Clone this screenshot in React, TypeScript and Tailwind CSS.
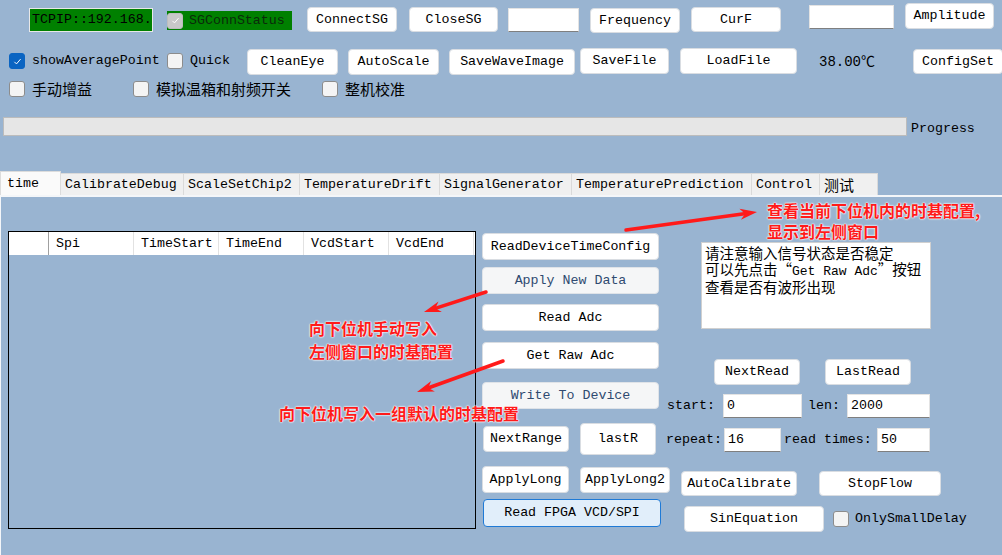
import React from "react";
import clsx from "clsx";

const MONO = "font-['Liberation_Mono','Noto_Sans_CJK_SC',monospace]";
const CJK = "font-['Noto_Sans_CJK_SC','Noto_Sans',sans-serif]";

type BtnProps = {
  label: string;
  className?: string;
  disabled?: boolean;
  focused?: boolean;
};

function Btn({ label, className, disabled, focused }: BtnProps) {
  return (
    <div
      className={clsx(
        "flex shrink-0 items-center justify-center rounded-[4px] border text-[13.3px] leading-none whitespace-nowrap",
        disabled && "border-[#dfe3e8] bg-[#f5f6f7] text-[#2f4a70]",
        focused && "border-[#1f7ad6] bg-[#e1eefa] text-black",
        !disabled && !focused && "border-[#d9dde2] bg-white text-black",
        className
      )}
    >
      {label}
    </div>
  );
}

function TextBox({ value, className }: { value?: string; className?: string }) {
  return (
    <div
      className={clsx(
        "flex shrink-0 items-center border border-[#e3e3e3] border-b-[#7f7f7f] bg-white pl-[3px] text-[13.3px] leading-none text-black",
        className
      )}
    >
      {value}
    </div>
  );
}

function Check({ checked, disabled }: { checked?: boolean; disabled?: boolean }) {
  return (
    <div
      className={clsx(
        "flex size-[16px] shrink-0 items-center justify-center rounded-[3px] border",
        checked && !disabled && "border-[#0a64c2] bg-[#0a64c2]",
        checked && disabled && "border-[#bdbdbd] bg-[#c8c8c8]",
        !checked && "border-[#8c8c8c] bg-[#f4f4f4]"
      )}
    >
      {checked && (
        <svg viewBox="0 0 16 16" className="size-[11px]">
          <path d="M3.5 8.5l3 3 6-7" fill="none" stroke="white" strokeWidth="1.4" />
        </svg>
      )}
    </div>
  );
}

function CheckLabel({ label, checked, className, cjk }: { label: string; checked?: boolean; className?: string; cjk?: boolean }) {
  return (
    <div className={clsx("flex h-[16px] shrink-0 items-center", className)}>
      <Check checked={checked} />
      <span className={clsx("ml-[7px] whitespace-nowrap leading-[16px] text-black", cjk ? clsx(CJK, "text-[15px]") : "text-[13.3px]")}>{label}</span>
    </div>
  );
}

const tabs = [
  { label: "CalibrateDebug", w: "w-[123px]" },
  { label: "ScaleSetChip2", w: "w-[116px]" },
  { label: "TemperatureDrift", w: "w-[140px]" },
  { label: "SignalGenerator", w: "w-[132px]" },
  { label: "TemperaturePrediction", w: "w-[180px]" },
  { label: "Control", w: "w-[68px]" },
  { label: "测试", w: "w-[58px]" },
];

const cols = ["Spi", "TimeStart", "TimeEnd", "VcdStart", "VcdEnd"];

function arrow(x1: number, y1: number, x2: number, y2: number) {
  const dx = x2 - x1;
  const dy = y2 - y1;
  const len = Math.hypot(dx, dy);
  const ux = dx / len;
  const uy = dy / len;
  const hl = 17;
  const hw = 5.5;
  const bx = x2 - ux * hl;
  const by = y2 - uy * hl;
  const pts = `${x2},${y2} ${bx - uy * hw},${by + ux * hw} ${bx + ux * 5},${by + uy * 5} ${bx + uy * hw},${by - ux * hw}`;
  return (
    <g key={`${x1}-${y1}`}>
      <line x1={x1} y1={y1} x2={bx + ux * 6} y2={by + uy * 6} stroke="#ff1a1a" strokeWidth="3.5" strokeLinecap="round" />
      <polygon points={pts} fill="#ff1a1a" />
    </g>
  );
}

export default function App() {
  return (
    <div className={clsx("relative h-[555px] w-[1002px] overflow-hidden bg-[#99b4d1]", MONO)}>
      {/* row 1 */}
      <div className="flex h-[40px] items-start">
        <div className="ml-[29px] mt-[8px] flex h-[24px] w-[124px] shrink-0 items-center overflow-hidden border border-[#e8e8e8] bg-[#008000] pl-[2px] text-[13.3px] text-black">
          TCPIP::192.168.
        </div>
        <div className="ml-[14px] mt-[11px] flex h-[19px] w-[125px] shrink-0 items-center bg-[#008000]">
          <Check checked disabled />
          <span className="ml-[6px] text-[13.3px] text-[#0b2a0b]">SGConnStatus</span>
        </div>
        <Btn label="ConnectSG" className="ml-[15px] mt-[7px] h-[25px] w-[90px]" />
        <Btn label="CloseSG" className="ml-[12px] mt-[7px] h-[25px] w-[89px]" />
        <TextBox className="ml-[10px] mt-[8px] h-[24px] w-[71px]" />
        <Btn label="Frequency" className="ml-[11px] mt-[8px] h-[25px] w-[90px]" />
        <Btn label="CurF" className="ml-[11px] mt-[7px] h-[25px] w-[90px]" />
        <TextBox className="ml-[28px] mt-[5px] h-[24px] w-[85px]" />
        <Btn label="Amplitude" className="ml-[11px] mt-[3px] h-[26px] w-[89px]" />
      </div>

      {/* row 2 */}
      <div className="flex h-[38px] items-start">
        <CheckLabel label="showAveragePoint" checked className="ml-[9px] mt-[13px] w-[158px]" />
        <CheckLabel label="Quick" className="mt-[13px] w-[80px]" />
        <Btn label="CleanEye" className="mt-[9px] h-[26px] w-[91px]" />
        <Btn label="AutoScale" className="ml-[10px] mt-[9px] h-[26px] w-[91px]" />
        <Btn label="SaveWaveImage" className="ml-[10px] mt-[9px] h-[26px] w-[126px]" />
        <Btn label="SaveFile" className="ml-[5px] mt-[8px] h-[26px] w-[89px]" />
        <Btn label="LoadFile" className="ml-[11px] mt-[8px] h-[26px] w-[117px]" />
        <div className="ml-[22px] mt-[14px] w-[94px] shrink-0 text-[14px] leading-[16px] text-black">38.00℃</div>
        <Btn label="ConfigSet" className="mt-[9px] h-[25px] w-[90px]" />
      </div>

      {/* row 3 */}
      <div className="flex h-[24px] items-start">
        <CheckLabel label="手动增益" cjk className="ml-[9px] mt-[3px] w-[124px]" />
        <CheckLabel label="模拟温箱和射频开关" cjk className="mt-[3px] w-[189px]" />
        <CheckLabel label="整机校准" cjk className="mt-[3px]" />
      </div>

      {/* progress */}
      <div className="mt-[15px] flex h-[19px] items-start">
        <div className="ml-[3px] h-[19px] w-[904px] shrink-0 border border-[#bcbcbc] bg-[#e6e6e6]" />
        <span className="ml-[4px] mt-[4px] text-[13.3px] leading-[16px] text-black">Progress</span>
      </div>

      {/* tabs */}
      <div className="mt-[35px] flex h-[24px] items-end">
        <div className="flex h-[24px] w-[61px] shrink-0 items-center border-x border-t border-[#dcdcdc] bg-[#fafafa] pl-[6px] text-[13.3px] leading-none text-black">
          time
        </div>
        {tabs.map((t) => (
          <div
            key={t.label}
            className={clsx(
              "flex h-[22px] shrink-0 items-center border-r border-t border-[#dadada] bg-[#f0f0f0] pl-[4px] leading-none text-black",
              t.w,
              t.label === "测试" ? clsx(CJK, "text-[15px]") : "text-[13.3px]"
            )}
          >
            {t.label}
          </div>
        ))}
      </div>

      {/* tab page */}
      <div className="flex h-[362px] border-l border-t-2 border-[#f4f6f9]">
        {/* grid */}
        <div className="ml-[7px] mt-[34px] h-[298px] w-[468px] shrink-0 border border-black">
          <div className="flex h-[23px] bg-white">
            <div className="w-[40px] shrink-0 border-r border-[#a0a0a0]" />
            {cols.map((c) => (
              <div key={c} className="flex w-[85px] shrink-0 items-center border-r border-[#e2e2e2] pl-[7px] text-[13.3px] text-black">
                {c}
              </div>
            ))}
          </div>
        </div>

        {/* button column */}
        <div className="ml-[6px] flex w-[184px] shrink-0 flex-col items-start">
          <Btn label="ReadDeviceTimeConfig" className="mt-[36px] h-[27px] w-[177px]" />
          <Btn label="Apply New Data" disabled className="mt-[7px] h-[27px] w-[177px]" />
          <Btn label="Read Adc" className="mt-[10px] h-[27px] w-[177px]" />
          <Btn label="Get Raw Adc" className="mt-[11px] h-[27px] w-[177px]" />
          <Btn label="Write To Device" disabled className="mt-[13px] h-[27px] w-[177px]" />
          <div className="mt-[14px] flex items-start">
            <Btn label="NextRange" className="ml-[1px] mt-[3px] h-[26px] w-[86px]" />
            <Btn label="lastR" className="ml-[11px] h-[32px] w-[76px]" />
          </div>
          <div className="mt-[11px] flex items-start">
            <Btn label="ApplyLong" className="h-[27px] w-[87px]" />
            <Btn label="ApplyLong2" className="ml-[11px] mt-[1px] h-[26px] w-[90px]" />
          </div>
          <Btn label="Read FPGA VCD/SPI" focused className="ml-[1px] mt-[6px] h-[28px] w-[178px]" />
        </div>

        {/* right panel */}
        <div className="flex flex-col items-start">
          <div className={clsx("ml-[35px] mt-[45px] h-[87px] w-[230px] whitespace-nowrap border border-[#d0d0d0] bg-white px-[3px] pt-[2px] text-[14.5px] leading-[15.5px] text-black", CJK)}>
            <div>请注意输入信号状态是否稳定</div>
            <div>
              可以先点击“<span className={clsx(MONO, "text-[13px]")}>Get Raw Adc</span>”按钮
            </div>
            <div>查看是否有波形出现</div>
          </div>
          <div className="mt-[30px] flex">
            <Btn label="NextRead" className="ml-[48px] h-[26px] w-[86px]" />
            <Btn label="LastRead" className="ml-[25px] h-[26px] w-[86px]" />
          </div>
          <div className="mt-[9px] flex items-center text-[13.3px] text-black">
            <span className="ml-[1px] w-[56px] shrink-0">start:</span>
            <TextBox value="0" className="h-[24px] w-[79px]" />
            <span className="ml-[6px] w-[39px] shrink-0">len:</span>
            <TextBox value="2000" className="h-[24px] w-[83px]" />
          </div>
          <div className="mt-[10px] flex items-center text-[13.3px] text-black">
            <span className="w-[58px] shrink-0">repeat:</span>
            <TextBox value="16" className="h-[24px] w-[57px]" />
            <span className="ml-[3px] w-[93px] shrink-0">read times:</span>
            <TextBox value="50" className="h-[24px] w-[53px]" />
          </div>
          <div className="mt-[19px] flex">
            <Btn label="AutoCalibrate" className="ml-[15px] h-[25px] w-[116px]" />
            <Btn label="StopFlow" className="ml-[22px] h-[25px] w-[122px]" />
          </div>
          <div className="mt-[10px] flex items-center">
            <Btn label="SinEquation" className="ml-[18px] h-[26px] w-[140px]" />
            <div className="ml-[9px]">
              <Check />
            </div>
            <span className="ml-[6px] text-[13.3px] text-black">OnlySmallDelay</span>
          </div>
        </div>
      </div>

      {/* annotations */}
      <svg className="pointer-events-none absolute left-0 top-0" width="1002" height="555">
        {arrow(626, 230, 757, 212)}
        {arrow(486, 292, 424, 312)}
        {arrow(503, 361, 417, 392)}
      </svg>
      <div
        className={clsx(
          "pointer-events-none absolute left-[767px] top-[200px] text-[16px] font-bold leading-[21px] text-[#ff1a1a] [text-shadow:0_0_1px_#fff,0_0_2px_#fff,0_0_2px_#fff]",
          CJK
        )}
      >
        <div>查看当前下位机内的时基配置,</div>
        <div>显示到左侧窗口</div>
      </div>
      <div
        className={clsx(
          "pointer-events-none absolute left-[309px] top-[317px] text-[16px] font-bold leading-[23px] text-[#ff1a1a] [text-shadow:0_0_1px_#fff,0_0_2px_#fff,0_0_2px_#fff]",
          CJK
        )}
      >
        <div>向下位机手动写入</div>
        <div>左侧窗口的时基配置</div>
      </div>
      <div
        className={clsx(
          "pointer-events-none absolute left-[279px] top-[402px] whitespace-nowrap text-[16px] font-bold leading-[22px] text-[#ff1a1a] [text-shadow:0_0_1px_#fff,0_0_2px_#fff,0_0_2px_#fff]",
          CJK
        )}
      >
        向下位机写入一组默认的时基配置
      </div>
    </div>
  );
}
